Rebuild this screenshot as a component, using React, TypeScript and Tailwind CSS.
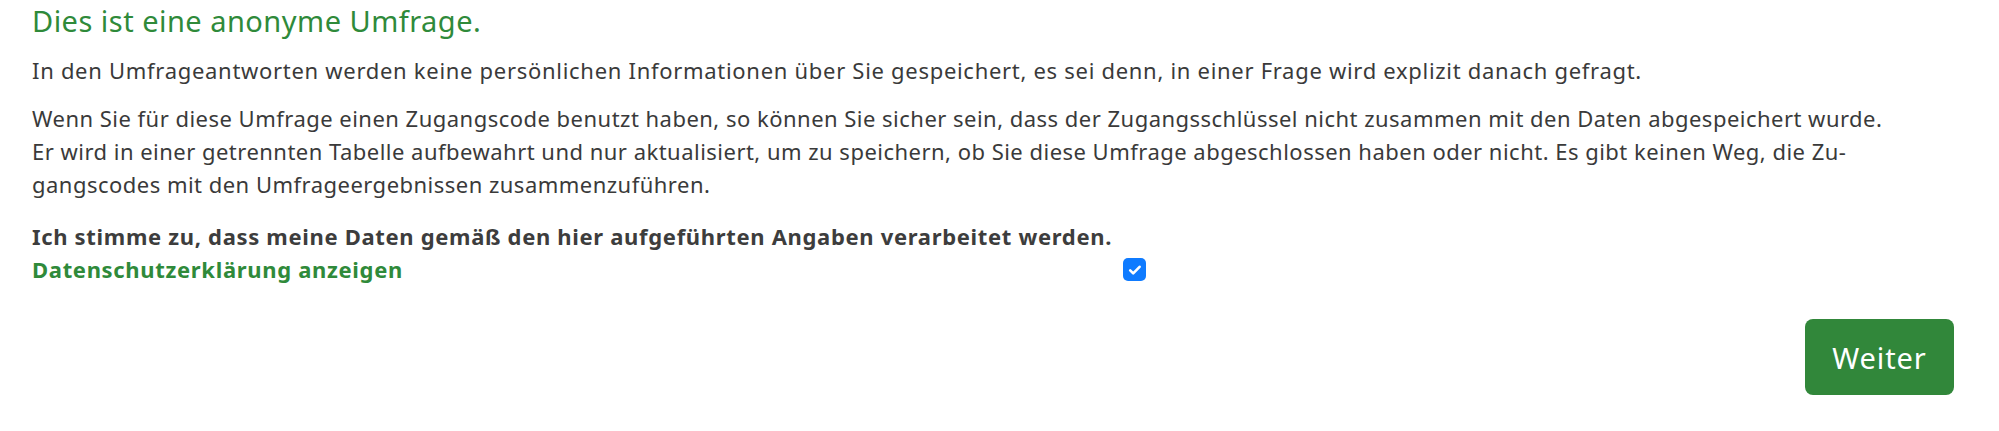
import React from 'react';

const App: React.FC = () => {
  return (
    <div
      className="min-h-screen bg-white pl-[32px] pr-[45px] pt-[4px] text-[#3a3a3a] tracking-[0.03em]"
      style={{ fontFamily: '"Noto Sans", "Open Sans", sans-serif' }}
    >
      {/* Heading */}
      <h2 className="text-[29px] leading-[34px] font-normal text-[#2f8a3a]">Dies ist eine anonyme Umfrage.</h2>

      <p className="mt-[16px] text-[22px] leading-[33px] tracking-[0.032em]">
        In den Umfrageantworten werden keine persönlichen Informationen über Sie gespeichert, es sei denn, in einer Frage wird explizit danach gefragt.
      </p>

      <p className="mt-[15px] text-[22px] leading-[33px]">
        Wenn Sie für diese Umfrage einen Zugangscode benutzt haben, so können Sie sicher sein, dass der Zugangsschlüssel nicht zusammen mit den Daten abgespeichert wurde.
        <br />
        Er wird in einer getrennten Tabelle aufbewahrt und nur aktualisiert, um zu speichern, ob Sie diese Umfrage abgeschlossen haben oder nicht. Es gibt keinen Weg, die Zu-
        <br />
        gangscodes mit den Umfrageergebnissen zusammenzuführen.
      </p>

      {/* Consent */}
      <div className="mt-[19px] tracking-[0.042em]">
        <p className="text-[22px] leading-[33px] font-bold text-[#3d3d3d]">
          Ich stimme zu, dass meine Daten gemäß den hier aufgeführten Angaben verarbeitet werden.
        </p>
        <div className="flex items-center">
          <a href="#" className="w-[1091px] shrink-0 text-[22px] leading-[33px] font-bold text-[#2f8a3a]">
            Datenschutzerklärung anzeigen
          </a>
          <span className="flex h-[23px] w-[23px] items-center justify-center rounded-[5px] bg-[#0f7bff]">
            <svg viewBox="0 0 16 16" className="h-[16px] w-[16px]" fill="none" stroke="white" strokeWidth={2.6} strokeLinecap="round" strokeLinejoin="round">
              <path d="M3.2 8.4l3 3 6.4-6.6" />
            </svg>
          </span>
        </div>
      </div>

      {/* Navigation */}
      <div className="mt-[33px] flex justify-end">
        <button className="h-[76px] w-[149px] rounded-[8px] bg-[#31873a] text-[29px] leading-none text-white tracking-[0.03em]">
          Weiter
        </button>
      </div>
    </div>
  );
};

export default App;
